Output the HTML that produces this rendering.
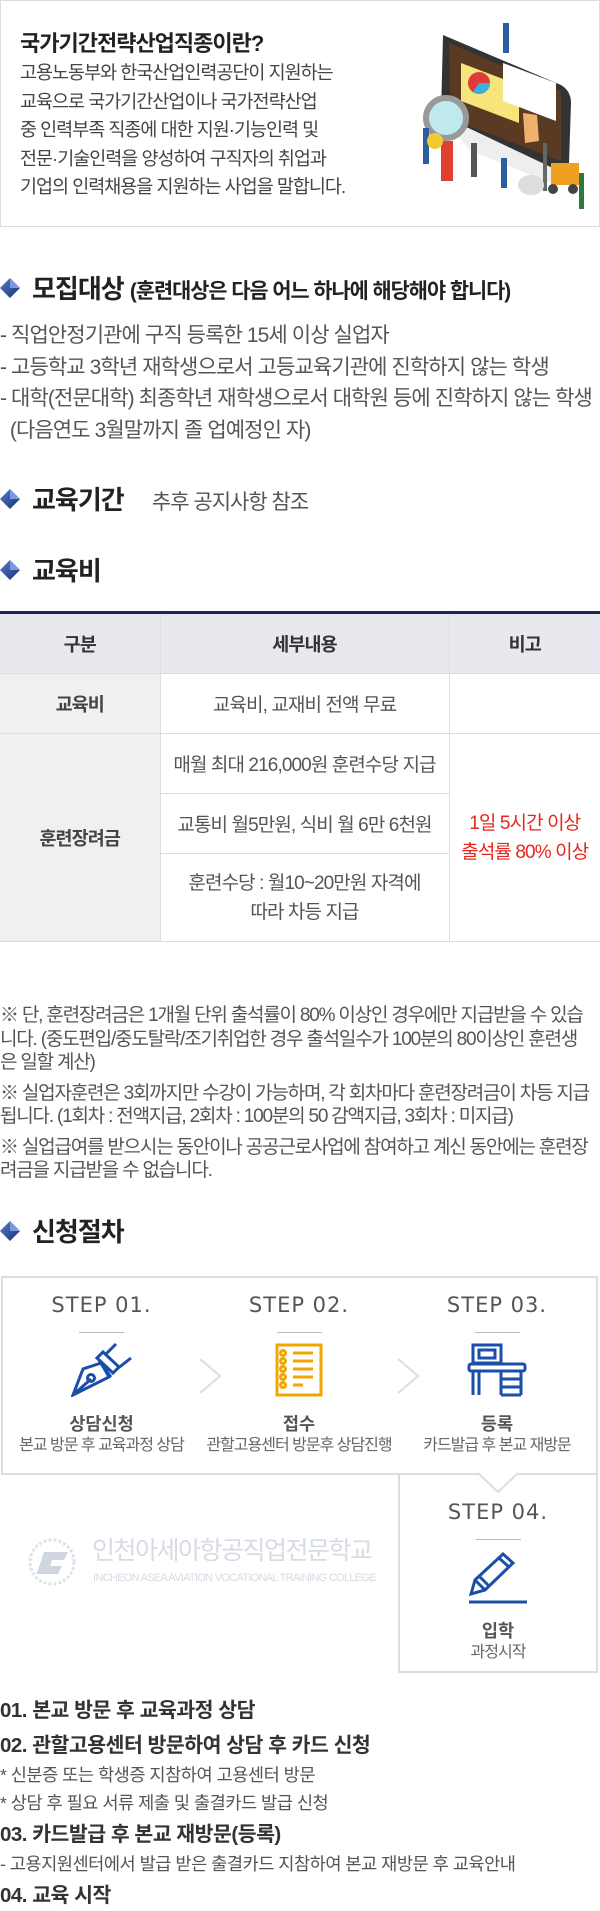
<!DOCTYPE html>
<html><head><meta charset="utf-8"><style>
*{margin:0;padding:0;box-sizing:border-box}
body{width:600px;height:1911px;background:#fff;font-family:"Liberation Sans","Noto Sans CJK KR",sans-serif;color:#555;position:relative;overflow:hidden}
.abs{position:absolute}
.intro{left:0;top:0;width:600px;height:227px;border:1px solid #ddd;background:#fff}
.intro h2{position:absolute;left:19px;top:25px;font-size:22px;color:#222;font-weight:bold;letter-spacing:-1px;white-space:nowrap}
.intro p{position:absolute;left:19px;top:58px;font-size:18.5px;line-height:28.5px;color:#444;letter-spacing:-1px;white-space:nowrap}
.sec{left:0;font-size:26px;font-weight:bold;color:#222;letter-spacing:-1px;white-space:nowrap;line-height:34px}
.dia{display:inline-block;width:20px;height:20px;vertical-align:middle;margin-right:12px;position:relative;top:-3px}
.list{left:0;font-size:21px;line-height:31.5px;color:#555;letter-spacing:-0.9px;white-space:nowrap}
table{position:absolute;left:0;top:611px;width:600px;border-collapse:collapse;border-top:3px solid #14285a;font-size:19px;color:#555}
td{border:1px solid #ddd;text-align:center;vertical-align:middle;letter-spacing:-0.9px;white-space:nowrap}
td:first-child{border-left:none}td:last-child{border-right:none}
.th td{background:#e7e9ee;font-weight:bold;color:#333;font-size:18.5px}
.lbl{background:#f0f0f0;font-weight:bold;color:#444;font-size:18.5px}
.notes{left:0;top:1004px;width:600px;font-size:19px;line-height:23.5px;color:#555;letter-spacing:-1.2px;white-space:nowrap}
.notes p{margin-bottom:7px}
.step{border:2px solid #ddd;background:#fff;text-align:center}
.st{font-family:"DejaVu Sans",sans-serif;font-size:21px;color:#555;letter-spacing:1px;margin-top:14px;line-height:26px}
.ln{width:45px;height:1px;background:#bbb;margin:14px auto 0}
.ic{margin:10px auto 0;display:block}
.t1{font-size:17.5px;color:#555;font-weight:bold;margin-top:16px;line-height:22px}
.t2{font-size:16px;color:#666;letter-spacing:-1px;line-height:22px;white-space:nowrap}
.bl{left:0;top:1696px;font-size:16px;color:#444;letter-spacing:-0.5px;white-space:nowrap}
.bl b{display:block;font-size:20.5px;color:#333;line-height:30px}
.bl span{display:block;font-size:17.6px;line-height:28px;color:#555}
</style></head><body>
<div class="abs intro">
<h2>국가기간전략산업직종이란?</h2>
<p>고용노동부와 한국산업인력공단이 지원하는<br>교육으로 국가기간산업이나 국가전략산업<br>중 인력부족 직종에 대한 지원·기능인력 및<br>전문·기술인력을 양성하여 구직자의 취업과<br>기업의 인력채용을 지원하는 사업을 말합니다.</p>
<svg class="abs" style="left:410px;top:22px" width="175" height="190" viewBox="0 0 175 190">
<path d="M32 12 L150 62 Q160 68 160 80 L158 140 Q156 150 146 147 L40 106 Q30 102 30 92 Z" fill="#333"/>
<path d="M38 20 L150 68 L150 138 L40 96 Z" fill="#5b3a24"/>
<path d="M30 92 L146 147 L140 160 L60 128 Z" fill="#eee"/>
<path d="M50 40 L108 62 L108 100 L50 78Z" fill="#f5e57a"/>
<circle cx="68" cy="60" r="11" fill="#e03a3a"/><path d="M68 60 L79 60 A11 11 0 0 1 62 69Z" fill="#3ab0e0"/>
<path d="M92 40 L145 60 L145 98 L92 78Z" fill="#fff"/>
<circle cx="35" cy="95" r="20" fill="#bfe9ef" stroke="#999" stroke-width="6"/>
<rect x="30" y="118" width="12" height="40" fill="#e04030"/>
<path d="M112 90 L126 92 L128 118 L114 120Z" fill="#f0b070"/>
<rect x="140" y="140" width="28" height="22" fill="#f0a020"/><rect x="132" y="120" width="4" height="48" fill="#666"/>
<circle cx="142" cy="166" r="5" fill="#444"/><circle cx="162" cy="166" r="5" fill="#444"/>
<rect x="92" y="0" width="6" height="30" fill="#2a5ea0"/>
<rect x="12" y="105" width="6" height="36" fill="#2a5ea0"/><circle cx="24" cy="118" r="8" fill="#f3c830"/>
<rect x="168" y="150" width="5" height="36" fill="#2a7a40"/>
<ellipse cx="120" cy="162" rx="13" ry="10" fill="#ddd"/>
<rect x="60" y="120" width="6" height="34" fill="#555"/><rect x="90" y="135" width="6" height="30" fill="#2a5ea0"/>
</svg>
</div>

<svg width="0" height="0" style="position:absolute"><defs><linearGradient id="g" x1="0" y1="0" x2="1" y2="1"><stop offset="0" stop-color="#5a7fd0"/><stop offset="1" stop-color="#13306e"/></linearGradient></defs></svg>

<div class="abs sec" style="top:272px"><svg class="dia" viewBox="0 0 20 20"><path d="M10 0 L20 10 L10 20 L0 10Z" fill="url(#g)"/><path d="M10 0 L20 10 L10 10Z" fill="#7a9be0"/></svg>모집대상 <span style="font-size:20.8px">(훈련대상은 다음 어느 하나에 해당해야 합니다)</span></div>
<div class="abs list" style="top:320px">- 직업안정기관에 구직 등록한 15세 이상 실업자<br>- 고등학교 3학년 재학생으로서 고등교육기관에 진학하지 않는 학생<br>- 대학(전문대학) 최종학년 재학생으로서 대학원 등에 진학하지 않는 학생<br>&nbsp;&nbsp;(다음연도 3월말까지 졸 업예정인 자)</div>

<div class="abs sec" style="top:483px"><svg class="dia" viewBox="0 0 20 20"><path d="M10 0 L20 10 L10 20 L0 10Z" fill="url(#g)"/><path d="M10 0 L20 10 L10 10Z" fill="#7a9be0"/></svg>교육기간 <span style="font-size:21px;font-weight:normal;color:#555;margin-left:22px">추후 공지사항 참조</span></div>

<div class="abs sec" style="top:554px"><svg class="dia" viewBox="0 0 20 20"><path d="M10 0 L20 10 L10 20 L0 10Z" fill="url(#g)"/><path d="M10 0 L20 10 L10 10Z" fill="#7a9be0"/></svg>교육비</div>

<table>
<tr class="th" style="height:61px"><td style="width:160px">구분</td><td style="width:289px">세부내용</td><td>비고</td></tr>
<tr style="height:60px"><td class="lbl">교육비</td><td>교육비, 교재비 전액 무료</td><td></td></tr>
<tr style="height:60px"><td class="lbl" rowspan="3">훈련장려금</td><td>매월 최대 216,000원 훈련수당 지급</td><td rowspan="3" style="color:#e8261e;line-height:29px">1일 5시간 이상<br>출석률 80% 이상</td></tr>
<tr style="height:60px"><td>교통비 월5만원, 식비 월 6만 6천원</td></tr>
<tr style="height:88px"><td style="line-height:29px">훈련수당 : 월10~20만원 자격에<br>따라 차등 지급</td></tr>
</table>

<div class="abs notes">
<p>※ 단, 훈련장려금은 1개월 단위 출석률이 80% 이상인 경우에만 지급받을 수 있습<br>니다. (중도편입/중도탈락/조기취업한 경우 출석일수가 100분의 80이상인 훈련생<br>은 일할 계산)</p>
<p>※ 실업자훈련은 3회까지만 수강이 가능하며, 각 회차마다 훈련장려금이 차등 지급<br>됩니다. (1회차 : 전액지급, 2회차 : 100분의 50 감액지급, 3회차 : 미지급)</p>
<p>※ 실업급여를 받으시는 동안이나 공공근로사업에 참여하고 계신 동안에는 훈련장<br>려금을 지급받을 수 없습니다.</p>
</div>

<div class="abs sec" style="top:1215px"><svg class="dia" viewBox="0 0 20 20"><path d="M10 0 L20 10 L10 20 L0 10Z" fill="url(#g)"/><path d="M10 0 L20 10 L10 10Z" fill="#7a9be0"/></svg>신청절차</div>

<div class="abs step" style="left:1px;top:1276px;width:201px;height:199px">
<div class="st">STEP 01.</div><div class="ln"></div>
<svg class="ic" width="62" height="54" viewBox="0 0 62 54" fill="none" stroke="#1a4fa8" stroke-width="3"><path d="M2 52 L12 26 L30 20 L38 34 Z M2 52 L20 36"/><circle cx="20" cy="35" r="3.5"/><path d="M28 18 L40 34 M26 15 L42 30 L48 24 L32 9Z M34 12 L45 1 M46 26 L60 15"/></svg>
<div class="t1">상담신청</div><div class="t2">본교 방문 후 교육과정 상담</div></div>
<div class="abs step" style="left:200px;top:1276px;width:200px;height:199px;border-left:none">
<div class="st">STEP 02.</div><div class="ln"></div>
<svg class="ic" width="48" height="54" viewBox="0 0 48 54" fill="none" stroke="#f5a500" stroke-width="3"><rect x="2" y="2" width="44" height="50"/><path d="M18 10h20M18 18h20M18 26h20M18 34h20M18 42h10"/><circle cx="8" cy="10" r="2.5"/><circle cx="8" cy="18" r="2.5"/><circle cx="8" cy="26" r="2.5"/><circle cx="8" cy="34" r="2.5"/><circle cx="8" cy="42" r="2.5"/></svg>
<div class="t1">접수</div><div class="t2">관할고용센터 방문후 상담진행</div></div>
<div class="abs step" style="left:398px;top:1276px;width:200px;height:199px;border-left:none">
<div class="st">STEP 03.</div><div class="ln"></div>
<svg class="ic" width="60" height="54" viewBox="0 0 60 54" fill="none" stroke="#1a4fa8" stroke-width="3"><rect x="6" y="2" width="28" height="18"/><rect x="12" y="7" width="16" height="8"/><rect x="2" y="21" width="56" height="7" rx="2"/><path d="M6 28v24M12 28v24M34 28v24M54 28v24M34 36h20M34 44h20M34 52h20"/></svg>
<div class="t1">등록</div><div class="t2">카드발급 후 본교 재방문</div></div>
<svg class="abs" style="left:199px;top:1276px" width="24" height="199"><path d="M1 83 L21 100 L1 117" fill="none" stroke="#ddd" stroke-width="2"/><rect x="0" y="85" width="1.5" height="30" fill="#fff"/></svg>
<svg class="abs" style="left:397px;top:1276px" width="24" height="199"><path d="M1 83 L21 100 L1 117" fill="none" stroke="#ddd" stroke-width="2"/><rect x="0" y="85" width="1.5" height="30" fill="#fff"/></svg>
<div class="abs step" style="left:398px;top:1473px;width:200px;height:200px">
<div class="st" style="margin-top:24px">STEP 04.</div><div class="ln"></div>
<svg class="ic" width="62" height="54" viewBox="0 0 62 54" fill="none" stroke="#1a4fa8" stroke-width="3"><path d="M4 44 L8 30 L36 4 L46 13 L18 40 Z M8 30 L18 40 M12 26 L22 36 M32 8 L42 17"/><path d="M2 52 H60"/></svg>
<div class="t1">입학</div><div class="t2">과정시작</div></div>
<svg class="abs" style="left:478px;top:1472px" width="40" height="22"><path d="M0 1 L20 20 L40 1" fill="#fff" stroke="#ddd" stroke-width="2"/></svg>
<svg class="abs" style="left:22px;top:1538px" width="60" height="50"><circle cx="30" cy="24" r="22" fill="none" stroke="#dde2ea" stroke-width="3" stroke-dasharray="3 2"/><path d="M16 32 L22 14 L46 14 L42 22 L30 22 L28 28 L40 28 L36 36 L14 36Z" fill="#cfd6e2"/></svg>
<div class="abs" style="left:92px;top:1536px;font-size:25px;color:#d6dbe4;letter-spacing:-1.5px;white-space:nowrap;line-height:30px">인천아세아항공직업전문학교</div>
<div class="abs" style="left:93px;top:1571px;font-size:11px;color:#d6dbe4;letter-spacing:-0.7px;white-space:nowrap;line-height:14px">INCHEON ASEA AVIATION VOCATIONAL TRAINING COLLEGE</div>

<div class="abs bl">
<b>01. 본교 방문 후 교육과정 상담</b>
<b style="margin-top:5px">02. 관할고용센터 방문하여 상담 후 카드 신청</b>
<span>* 신분증 또는 학생증 지참하여 고용센터 방문</span>
<span>* 상담 후 필요 서류 제출 및 출결카드 발급 신청</span>
<b style="margin-top:3px">03. 카드발급 후 본교 재방문(등록)</b>
<span>- 고용지원센터에서 발급 받은 출결카드 지참하여 본교 재방문 후 교육안내</span>
<b style="margin-top:3px">04. 교육 시작</b>
</div>
</body></html>
